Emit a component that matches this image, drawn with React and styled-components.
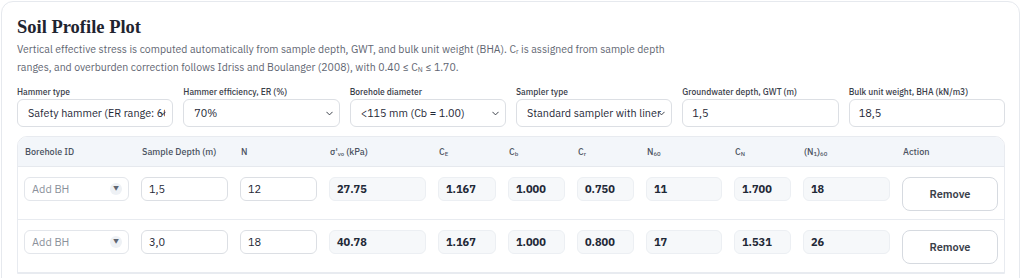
import React from "react";
import styled, { createGlobalStyle } from "styled-components";

const GlobalStyle = createGlobalStyle`
	html, body {
		margin: 0;
		padding: 0;
		background: #ffffff;
	}
	body {
		font-family: "IBM Plex Sans", "Noto Sans", Inter, sans-serif;
		color: #1f2937;
	}
	* {
		box-sizing: border-box;
	}
`;

const controls = [
	{ label: "Hammer type", kind: "select", value: "Safety hammer (ER range: 60-80%)" },
	{ label: "Hammer efficiency, ER (%)", kind: "select", value: "70%" },
	{ label: "Borehole diameter", kind: "select", value: "<115 mm (Cb = 1.00)" },
	{ label: "Sampler type", kind: "select", value: "Standard sampler with liner" },
	{ label: "Groundwater depth, GWT (m)", kind: "input", value: "1,5" },
	{ label: "Bulk unit weight, BHA (kN/m3)", kind: "input", value: "18,5" },
];

const rows = [
	{ depth: "1,5", n: "12", svo: "27.75", ce: "1.167", cb: "1.000", cr: "0.750", n60: "11", cn: "1.700", n160: "18" },
	{ depth: "3,0", n: "18", svo: "40.78", ce: "1.167", cb: "1.000", cr: "0.800", n60: "17", cn: "1.531", n160: "26" },
];

const Chevron = () => (
	<ChevronIcon viewBox="0 0 10 6" aria-hidden="true">
		<path d="M1 1l4 4 4-4" fill="none" stroke="#2b313b" strokeWidth="1.3" strokeLinecap="round" strokeLinejoin="round" />
	</ChevronIcon>
);

const App = () => {
	return (
		<>
			<GlobalStyle />
			<Card>
				<Title>Soil Profile Plot</Title>
				<Description>
					Vertical effective stress is computed automatically from sample depth, GWT, and bulk unit
					weight (BHA). C<sub>r</sub> is assigned from sample depth
					<br />
					ranges, and overburden correction follows Idriss and Boulanger (2008), with 0.40 ≤ C
					<sub>N</sub> ≤ 1.70.
				</Description>

				<Controls>
					{controls.map((c) => (
						<Field key={c.label}>
							<Label>{c.label}</Label>
							{c.kind === "select" ? (
								<SelectWrap>
									<Select defaultValue={c.value}>
										<option value={c.value}>{c.value}</option>
									</Select>
									<Chevron />
								</SelectWrap>
							) : (
								<TextInput defaultValue={c.value} />
							)}
						</Field>
					))}
				</Controls>

				<Table>
					<HeadRow>
						<Th>Borehole ID</Th>
						<Th>Sample Depth (m)</Th>
						<Th>N</Th>
						<Th>
							σ'<sub>vo</sub> (kPa)
						</Th>
						<Th>
							C<sub>E</sub>
						</Th>
						<Th>
							C<sub>b</sub>
						</Th>
						<Th>
							C<sub>r</sub>
						</Th>
						<Th>
							N<sub>60</sub>
						</Th>
						<Th>
							C<sub>N</sub>
						</Th>
						<Th>
							(N<sub>1</sub>)<sub>60</sub>
						</Th>
						<Th>Action</Th>
					</HeadRow>
					{rows.map((r, i) => (
						<Row key={i}>
							<Td>
								<BhPicker>
									<span>Add BH</span>
									<Caret>▼</Caret>
								</BhPicker>
							</Td>
							<Td>
								<CellInput defaultValue={r.depth} />
							</Td>
							<Td>
								<CellInput defaultValue={r.n} />
							</Td>
							<Td>
								<Computed>{r.svo}</Computed>
							</Td>
							<Td>
								<Computed>{r.ce}</Computed>
							</Td>
							<Td>
								<Computed>{r.cb}</Computed>
							</Td>
							<Td>
								<Computed>{r.cr}</Computed>
							</Td>
							<Td>
								<Computed>{r.n60}</Computed>
							</Td>
							<Td>
								<Computed>{r.cn}</Computed>
							</Td>
							<Td>
								<Computed>{r.n160}</Computed>
							</Td>
							<Td>
								<RemoveButton>Remove</RemoveButton>
							</Td>
						</Row>
					))}
				</Table>
			</Card>
		</>
	);
};

export default App;

const Card = styled.div`
	margin: 1px 4px 0 1px;
	border: 1px solid #e6e9ee;
	border-radius: 12px;
	padding: 17px 14px 0 15px;
	height: 290px;
	background: #ffffff;
`;

const Title = styled.h2`
	margin: 0;
	font-family: "Liberation Serif", "DejaVu Serif", serif;
	font-weight: 700;
	font-size: 18.5px;
	line-height: 16px;
	color: #1f2430;
`;

const Description = styled.p`
	margin: 5px 0 0;
	font-size: 10.5px;
	line-height: 18px;
	color: #5f6672;

	sub {
		font-size: 7px;
		vertical-align: -1px;
		line-height: 0;
	}
`;

const Controls = styled.div`
	display: grid;
	grid-template-columns: repeat(6, 1fr);
	gap: 10px;
	margin-top: 10px;
`;

const Field = styled.div`
	display: flex;
	flex-direction: column;
	gap: 2px;
`;

const Label = styled.label`
	font-size: 8.5px;
	line-height: 11px;
	font-weight: 500;
	color: #3a404a;
`;

const SelectWrap = styled.div`
	position: relative;
	height: 28px;
`;

const Select = styled.select`
	appearance: none;
	-webkit-appearance: none;
	height: 28px;
	width: 100%;
	border: 1px solid #dcdfe4;
	border-radius: 6px;
	background: #ffffff;
	padding: 0 7px 0 10px;
	font-family: inherit;
	font-size: 10.8px;
	color: #1f2937;
	outline: none;
`;

const ChevronIcon = styled.svg`
	position: absolute;
	right: 7px;
	top: 12px;
	width: 7px;
	height: 5px;
	pointer-events: none;
`;

const TextInput = styled.input`
	height: 28px;
	width: 100%;
	border: 1px solid #dcdfe4;
	border-radius: 6px;
	background: #ffffff;
	padding: 0 9px;
	font-family: inherit;
	font-size: 11px;
	color: #1f2937;
	outline: none;
`;

const Table = styled.div`
	margin-top: 9px;
	border: 1px solid #e8ebf0;
	border-radius: 10px 10px 0 0;
	overflow: hidden;
`;

const cols = "117px 99px 89px 109px 70px 69px 69px 88px 69px 99px 108px";

const HeadRow = styled.div`
	display: grid;
	grid-template-columns: ${cols};
	height: 30px;
	align-items: center;
	background: #f3f6fa;
	border-bottom: 1px solid #e6e9ee;
`;

const Th = styled.div`
	padding: 0 7px;
	font-size: 9px;
	font-weight: 500;
	color: #4b5361;
	white-space: nowrap;

	sub {
		font-size: 6px;
		vertical-align: -1px;
		line-height: 0;
	}
`;

const Row = styled.div`
	display: grid;
	grid-template-columns: ${cols};
	height: 53px;
	align-items: start;
	border-bottom: 1px solid #e8ebf0;
`;

const Td = styled.div`
	padding: 10px 6px 0;
`;

const CellInput = styled.input`
	width: 100%;
	height: 24px;
	border: 1px solid #dcdfe4;
	border-radius: 6px;
	background: #ffffff;
	padding: 0 7px;
	font-family: inherit;
	font-size: 11px;
	color: #1f2937;
	outline: none;
`;

const Computed = styled.div`
	height: 24px;
	display: flex;
	align-items: center;
	padding: 0 7px;
	border: 1px solid #eceff3;
	border-radius: 6px;
	background: #f6f8fa;
	font-size: 11px;
	font-weight: 700;
	color: #1f2937;
`;

const BhPicker = styled.div`
	height: 24px;
	display: flex;
	align-items: center;
	justify-content: space-between;
	padding: 0 6px 0 7px;
	border: 1px solid #e3e6eb;
	border-radius: 6px;
	background: #ffffff;
	font-size: 11px;
	color: #8b919b;
`;

const Caret = styled.span`
	width: 12px;
	height: 12px;
	border-radius: 50%;
	background: #eef1f5;
	display: flex;
	align-items: center;
	justify-content: center;
	font-size: 6px;
	color: #5f6672;
`;

const RemoveButton = styled.button`
	width: 100%;
	height: 34px;
	border: 1px solid #d6dae0;
	border-radius: 8px;
	background: #ffffff;
	font-family: inherit;
	font-size: 11px;
	font-weight: 600;
	color: #3a404a;
	cursor: pointer;
`;
